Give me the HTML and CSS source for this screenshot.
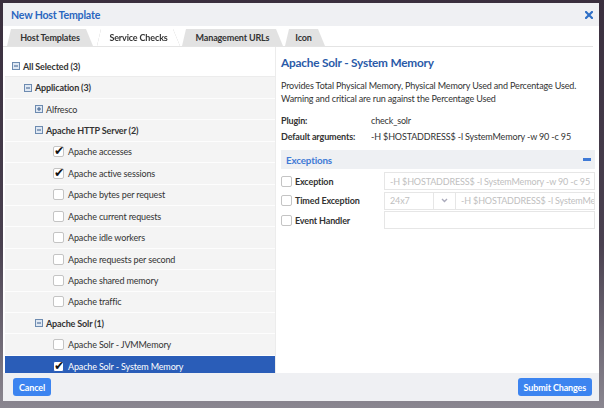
FILE: index.html
```html
<!DOCTYPE html>
<html>
<head>
<meta charset="utf-8">
<link rel="stylesheet" href="styles.css">
</head>
<body>
<div class="dialog">
  <div class="titlebar">
    <span class="title">New Host Template</span>
    <svg class="close" width="8" height="8" viewBox="0 0 8 8"><path d="M1 1L7 7M7 1L1 7" stroke="#2f6fc6" stroke-width="2.2" stroke-linecap="square"/></svg>
  </div>
  <div class="tabs">
    <div class="tabwrap"><div class="tab t1">Host Templates</div></div>
    <div class="tabwrap active"><div class="tab t2">Service Checks</div></div>
    <div class="tabwrap"><div class="tab t3">Management URLs</div></div>
    <div class="tabwrap"><div class="tab t4">Icon</div></div>
  </div>
  <div class="content">
    <div class="tree">
      <div class="row first lv0"><span class="tg"><svg width="8" height="8" viewBox="0 0 8 8"><rect x="0.5" y="0.5" width="7" height="7" fill="#dfe8f3" stroke="#6d8bb0"/><path d="M2 4H6" stroke="#3d5f8c"/></svg></span><b>All Selected (3)</b></div>
      <div class="row lv1"><span class="tg"><svg width="8" height="8" viewBox="0 0 8 8"><rect x="0.5" y="0.5" width="7" height="7" fill="#dfe8f3" stroke="#6d8bb0"/><path d="M2 4H6" stroke="#3d5f8c"/></svg></span><b>Application (3)</b></div>
      <div class="row lv2"><span class="tg"><svg width="8" height="8" viewBox="0 0 8 8"><rect x="0.5" y="0.5" width="7" height="7" fill="#dfe8f3" stroke="#6d8bb0"/><path d="M2 4H6M4 2V6" stroke="#3d5f8c"/></svg></span><span>Alfresco</span></div>
      <div class="row lv2"><span class="tg"><svg width="8" height="8" viewBox="0 0 8 8"><rect x="0.5" y="0.5" width="7" height="7" fill="#dfe8f3" stroke="#6d8bb0"/><path d="M2 4H6" stroke="#3d5f8c"/></svg></span><b>Apache HTTP Server (2)</b></div>
      <div class="row lv3"><span class="cb on"><span class="ck">✔</span></span><span>Apache accesses</span></div>
      <div class="row lv3"><span class="cb on"><span class="ck">✔</span></span><span>Apache active sessions</span></div>
      <div class="row lv3"><span class="cb"></span><span>Apache bytes per request</span></div>
      <div class="row lv3"><span class="cb"></span><span>Apache current requests</span></div>
      <div class="row lv3"><span class="cb"></span><span>Apache idle workers</span></div>
      <div class="row lv3"><span class="cb"></span><span>Apache requests per second</span></div>
      <div class="row lv3"><span class="cb"></span><span>Apache shared memory</span></div>
      <div class="row lv3"><span class="cb"></span><span>Apache traffic</span></div>
      <div class="row lv2"><span class="tg"><svg width="8" height="8" viewBox="0 0 8 8"><rect x="0.5" y="0.5" width="7" height="7" fill="#dfe8f3" stroke="#6d8bb0"/><path d="M2 4H6" stroke="#3d5f8c"/></svg></span><b>Apache Solr (1)</b></div>
      <div class="row lv3"><span class="cb"></span><span>Apache Solr - JVMMemory</span></div>
      <div class="row lv3 sel"><span class="cb on"><span class="ck">✔</span></span><span>Apache Solr - System Memory</span></div>
    </div>
    <div class="detail">
      <h2>Apache Solr - System Memory</h2>
      <p class="desc">Provides Total Physical Memory, Physical Memory Used and Percentage Used.<br>Warning and critical are run against the Percentage Used</p>
      <div class="kv"><b>Plugin:</b><span>check_solr</span></div>
      <div class="kv"><b>Default arguments:</b><span>-H $HOSTADDRESS$ -l SystemMemory -w 90 -c 95</span></div>
      <div class="exhead"><span>Exceptions</span><i class="minus"></i></div>
      <div class="exlist">
        <div class="exrow">
          <span class="cb"></span><b>Exception</b>
          <div class="field grow">-H $HOSTADDRESS$ -l SystemMemory -w 90 -c 95</div>
        </div>
        <div class="exrow">
          <span class="cb"></span><b>Timed Exception</b>
          <div class="field sel24">24x7</div>
          <div class="field chev"><svg width="7" height="5" viewBox="0 0 7 5"><path d="M1 1L3.5 3.5L6 1" fill="none" stroke="#aab" stroke-width="1.4"/></svg></div>
          <div class="field grow">-H $HOSTADDRESS$ -l SystemMemory -w 90 -c 95</div>
        </div>
        <div class="exrow">
          <span class="cb"></span><b>Event Handler</b>
          <div class="field grow"></div>
        </div>
      </div>
    </div>
  </div>
  <div class="footer">
    <button class="btn">Cancel</button>
    <button class="btn">Submit Changes</button>
  </div>
</div>
</body>
</html>
```
FILE: styles.css
```css
* { box-sizing: border-box; }
html, body { margin: 0; padding: 0; }
body {
  width: 604px; height: 408px; overflow: hidden;
  background: linear-gradient(#3a2f3e 0, #4a4150 60%, #8a8690 100%);
  padding: 3px 5px 0 3px;
  font-family: Lato, "Open Sans", sans-serif;
  color: #333;
}
.dialog {
  width: 596px; height: 398px;
  background: #fff;
  display: flex; flex-direction: column;
  overflow: hidden;
}
.titlebar {
  height: 23px; flex: none;
  background: #eff0f3;
  display: flex; align-items: center; justify-content: space-between;
  padding: 0 6px 0 8px;
}
.title { color: #2a66c0; font-weight: 700; font-size: 10.6px; letter-spacing: -0.2px; }
.tabs {
  height: 21px; flex: none;
  display: flex; align-items: flex-end;
  padding: 3px 0 0 4px;
  border-bottom: 1px solid #e4e4e4;
  margin-right: 6px;
}
.tabwrap.active { filter: drop-shadow(0 0 0.6px #b8b8b8); position: relative; z-index: 1; }
.tab {
  height: 17px;
  background: #e2e2e2;
  font-size: 9px; font-weight: 700; color: #333; letter-spacing: -0.15px;
  display: flex; align-items: center; justify-content: center;
  clip-path: polygon(4px 0, calc(100% - 7px) 0, 100% 100%, 0 100%);
}
.active .tab { background: #fff; }
.t1 { width: 86px; }
.t2 { width: 83px; margin-left: 4px; }
.t3 { width: 101px; margin-left: 2px; }
.t4 { width: 40px; margin-left: 2px; padding-right: 3px; }
.content {
  flex: 1; display: flex; min-height: 0;
  overflow: hidden;
}
.tree {
  width: 271px; margin-left: 2px; padding-top: 9px;
  border-right: 1px solid #ececec;
  flex: none;
}
.row {
  height: 21.43px;
  display: flex; align-items: center;
  background: #f4f4f4;
  border-bottom: 1px solid #fdfdfd;
  font-size: 9px; letter-spacing: -0.15px; color: #333;
  white-space: nowrap;
}
.row.first { background: #fff; border-bottom: 1px solid #ececec; }
.row b { font-weight: 700; color: #333; }
.lv0 { padding-left: 7px; }
.lv1 { padding-left: 19px; }
.lv2 { padding-left: 30px; }
.lv3 { padding-left: 48px; }
.tg { width: 8px; height: 8px; margin-right: 3px; display: flex; }
.cb {
  width: 11px; height: 11px; flex: none;
  border: 1px solid #c4c4c4; border-radius: 2px; background: #fff;
  margin-right: 4px; position: relative;
}
.ck {
  position: absolute; left: 0px; top: -4px;
  font-size: 12.5px; color: #111; line-height: 15px; letter-spacing: 0;
  font-family: "DejaVu Sans", sans-serif;
}
.row.sel { background: #2a5db8; color: #fff; }
.row.sel .cb { border-color: #2a5db8; }
.detail { flex: 1; min-width: 0; padding: 8px 4px 0 5px; }
h2 {
  margin: 0; font-size: 11.8px; color: #2a5aa8; font-weight: 700;
  letter-spacing: -0.2px; line-height: 16px;
}
.desc { margin: 9px 0 8px; font-size: 9px; letter-spacing: -0.15px; line-height: 12.5px; color: #333; }
.kv { display: flex; font-size: 9px; letter-spacing: -0.15px; line-height: 16px; height: 16px; }
.kv b { width: 90px; flex: none; font-weight: 700; }
.exhead {
  margin-top: 5px; height: 19px;
  background: #eef0f3;
  display: flex; align-items: center; justify-content: space-between;
  padding: 0 4px 0 5px;
  font-size: 9.8px; letter-spacing: -0.15px; font-weight: 700; color: #3f7ad6;
}
.minus { width: 8px; height: 3px; background: #3f7ad6; display: block; }
.exlist { display: flex; flex-direction: column; gap: 1.5px; padding-top: 3px; }
.exrow {
  display: flex; align-items: center;
  height: 18px;
  font-size: 9px; letter-spacing: -0.15px;
}
.exrow .cb { margin-right: 3px; }
.exrow b { width: 89px; flex: none; font-weight: 700; }
.field {
  height: 18px; border: 1px solid #e6e6e6; background: #fff;
  color: #c0c0c0;
  display: flex; align-items: center; padding-left: 5px;
  white-space: nowrap; overflow: hidden;
}
.grow { flex: 1; min-width: 0; }
.sel24 { width: 50px; flex: none; }
.chev { width: 21px; flex: none; justify-content: center; padding: 0; border-left: none; border-right: none; }
.footer {
  height: 28px; flex: none;
  background: #eff0f3;
  display: flex; align-items: center; justify-content: space-between;
  padding: 0 7px 0 10px;
}
.btn {
  height: 18px; border: none; border-radius: 3px;
  background: #3c84f0; color: #fff;
  font-family: Lato, "Open Sans", sans-serif;
  font-size: 9px; letter-spacing: -0.15px; font-weight: 700;
  padding: 0 6px;
}
```
